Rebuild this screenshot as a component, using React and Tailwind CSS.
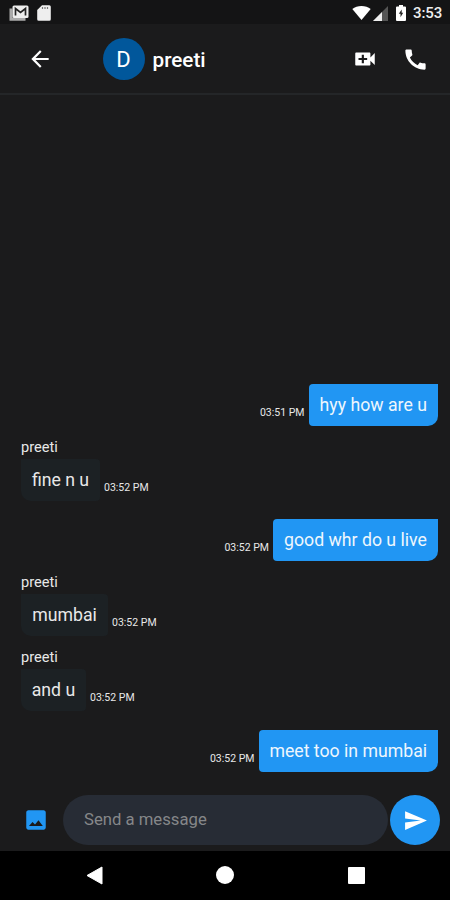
import React from "react";

const messages = [
  { text: "hyy how are u", time: "03:51 PM", mine: true, width: "w-[129.500px]", gap: "mt-0" },
  { text: "fine n u", time: "03:52 PM", mine: false, width: "w-[79px]", gap: "mt-[13px]" },
  { text: "good whr do u live", time: "03:52 PM", mine: true, width: "w-[165px]", gap: "mt-[18px]" },
  { text: "mumbai", time: "03:52 PM", mine: false, width: "w-[87px]", gap: "mt-[13px]" },
  { text: "and u", time: "03:52 PM", mine: false, width: "w-[65px]", gap: "mt-[13px]" },
  { text: "meet too in mumbai", time: "03:52 PM", mine: true, width: "w-[179.500px]", gap: "mt-[19px]" },
];

function Icon({ d, className }) {
  return (
    <svg viewBox="0 0 24 24" fill="currentColor" className={`shrink-0 ${className}`}>
      <path d={d} />
    </svg>
  );
}

function StatusBar() {
  return (
    <div className="flex h-6 shrink-0 items-start bg-[#141415] pt-[5px] pl-[9px] text-[#eeeeee]">
      <svg viewBox="0 0 20 16" className="h-4 w-5">
        <path d="M2 3.500v10.700h14.500" fill="none" stroke="#aaa" strokeWidth="3" />
        <rect x="3.5" y="0.5" width="16" height="12.5" rx="1.5" fill="#eee" />
        <path d="M6.5 10.500V3.5l5 4 5-4v7" fill="none" stroke="#222" strokeWidth="1.700" />
        <path d="M7 1.5h9l-4.500 3.500z" fill="#eee" />
      </svg>
      <svg viewBox="0 0 14 16" className="ml-[8px] h-4 w-[14px]">
        <path d="M5 0.200h7.300a1.500 1.500 0 0 1 1.500 1.500v12.600a1.500 1.500 0 0 1-1.500 1.500H1.700a1.500 1.500 0 0 1-1.500-1.500V5z" fill="#eee" />
        <path d="M5.500 2v2M8 2v2M10.500 2v2" stroke="#777" strokeWidth="1.200" />
      </svg>
      <svg viewBox="0 0 19 15" className="ml-auto h-[15px] w-[19px]">
        <path d="M0.300 4C5 0 14 0 18.700 4L9.500 15z" fill="#fff" />
      </svg>
      <svg viewBox="0 0 15 15" className="ml-[2px] mt-px h-[15px] w-[15px]">
        <path d="M0 15L15 0v15z" fill="#555" />
        <path d="M0 15L9 6v9z" fill="#eee" />
      </svg>
      <svg viewBox="0 0 10 16" className="ml-[8px] h-4 w-[10px]">
        <path d="M3 0h4v1.600h2a1 1 0 0 1 1 1V15a1 1 0 0 1-1 1H1a1 1 0 0 1-1-1V2.600a1 1 0 0 1 1-1h2z" fill="#fff" />
        <path d="M5.700 4.600L2.800 8.800h1.700v3.400l2.700-4.400H5.700z" fill="#222" />
      </svg>
      <span className="ml-[7px] mr-[7px] w-[30px] whitespace-nowrap text-[15px] leading-[17px] font-medium tracking-[-0.1px]">3:53</span>
    </div>
  );
}

function Header() {
  return (
    <header className="flex h-[71px] shrink-0 items-center border-b-2 border-[#242628] pl-[27px] text-white">
      <Icon className="mt-px h-[26px] w-[26px]" d="M20 11H7.830l5.590-5.590L12 4l-8 8 8 8 1.410-1.410L7.830 13H20v-2z" />
      <div className="ml-[49.500px] flex h-[42px] w-[42px] items-center justify-center rounded-full bg-[#01579b] pt-[2px] text-[22px]">D</div>
      <span className="ml-2 pt-[2px] text-[20.700px] leading-6 font-medium">preeti</span>
      <Icon className="mt-px mr-[23.500px] ml-auto h-[26px] w-[26px]" d="M17 10.500V7c0-.55-.45-1-1-1H4c-.55 0-1 .45-1 1v10c0 .55.45 1 1 1h12c.55 0 1-.45 1-1v-3.500l4 4v-11l-4 4zM14 13h-3v3H9v-3H6v-2h3V8h2v3h3v2z" />
      <Icon className="mt-[2px] mr-[21.500px] h-[27px] w-[27px]" d="M20.010 15.380c-1.230 0-2.420-.2-3.530-.56-.35-.12-.74-.03-1.010.24l-1.570 1.970c-2.830-1.350-5.480-3.900-6.890-6.830l1.950-1.660c.27-.28.35-.67.24-1.020-.37-1.110-.56-2.300-.56-3.530 0-.54-.45-.99-.99-.99H4.190C3.650 3 3 3.240 3 3.990 3 13.280 10.730 21 20.010 21c.71 0 .99-.63.99-1.180v-3.450c0-.54-.45-.99-.99-.99z" />
    </header>
  );
}

function Message({ text, time, mine, width, gap }) {
  const stamp = <span className="mb-[6px] whitespace-nowrap text-[10.500px] leading-[14px]">{time}</span>;
  if (mine) {
    return (
      <div className={`flex items-end justify-end gap-1 pr-3 ${gap}`}>
        {stamp}
        <div className={`flex h-[42px] items-center justify-center whitespace-nowrap rounded-l-[4px] rounded-br-[10px] bg-[#2196f3] pt-px text-[17.700px] leading-[21px] text-[#eef6fd] ${width}`}>{text}</div>
      </div>
    );
  }
  return (
    <div className={`pl-[21px] ${gap}`}>
      <div className="h-5 text-[14.600px] leading-4">{"preeti"}</div>
      <div className="flex items-end gap-1">
        <div className={`flex h-[42px] items-center justify-center whitespace-nowrap rounded-r-[4px] rounded-bl-[10px] bg-[#1c2124] pt-px text-[17.700px] leading-[21px] ${width}`}>{text}</div>
        {stamp}
      </div>
    </div>
  );
}

function Composer() {
  return (
    <div className="flex h-[50px] shrink-0 items-center">
      <Icon className="ml-[23px] h-[26px] w-[26px] text-[#2196f3]" d="M21 19V5c0-1.100-.9-2-2-2H5c-1.100 0-2 .9-2 2v14c0 1.100.9 2 2 2h14c1.100 0 2-.9 2-2zM8.800 13.800l2.300 2.400L14.300 12.300l4 5.200H5.500l3.300-3.700z" />
      <div className="ml-[14px] flex h-[50px] w-[325px] items-center rounded-full bg-[#272c35] pl-[21px] text-[16.700px] text-[#858789]">
        <span>Send a message</span>
      </div>
      <button className="ml-[2px] flex h-[50px] w-[50px] items-center justify-center rounded-full bg-[#2196f3] text-white">
        <Icon className="h-[25px] w-[25px]" d="M2.010 21L23 12 2.010 3 2 10l15 2-15 2z" />
      </button>
    </div>
  );
}

function NavigationBar() {
  return (
    <nav className="mt-[6px] flex h-[49px] shrink-0 items-start bg-black pt-[15px] text-white">
      <svg viewBox="0 0 17 19" className="ml-[86px] h-[19px] w-[17px]" fill="currentColor" stroke="currentColor" strokeLinejoin="round">
        <path d="M1 9.500L16 1v17z" />
      </svg>
      <div className="ml-[113px] h-[18px] w-[18px] rounded-full bg-white" />
      <div className="ml-[114px] mt-px h-[17px] w-[17px] rounded-[1px] bg-white" />
    </nav>
  );
}

export default function App() {
  return (
    <div className="flex h-[900px] w-[450px] flex-col overflow-hidden bg-[#1b1b1c] font-['Roboto',sans-serif] text-[#e8e8e8]">
      <StatusBar />
      <Header />
      <main className="flex min-h-0 flex-1 flex-col justify-end pb-[23px]">
        {messages.map((message) => (
          <Message key={message.text} {...message} />
        ))}
      </main>
      <Composer />
      <NavigationBar />
    </div>
  );
}
